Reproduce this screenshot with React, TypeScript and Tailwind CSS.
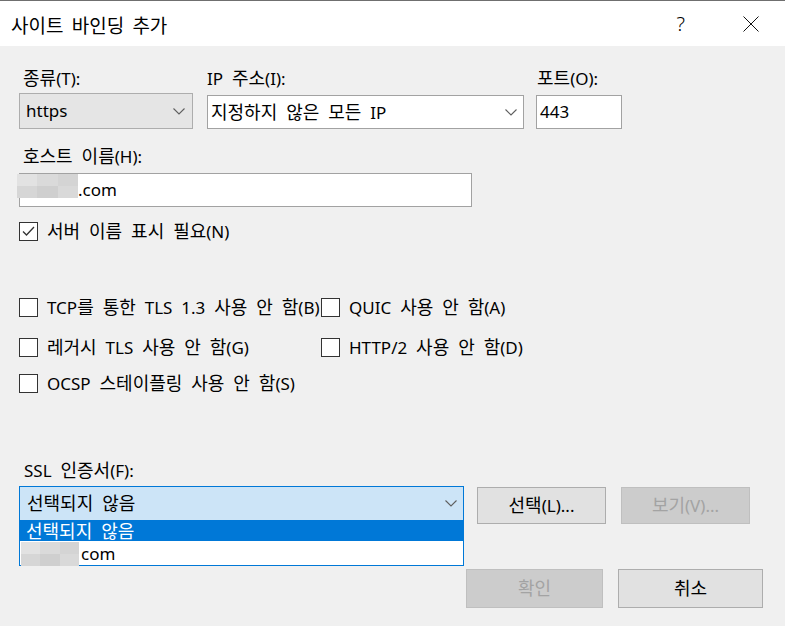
import React from "react";

const HANGUL = /([\uAC00-\uD7A3]+)/;

function K({ t, size = "text-[18px]" }: { t: string; size?: string }) {
  const parts = t.split(HANGUL);
  return (
    <span>
      {parts.map((p, i) =>
        /[\uAC00-\uD7A3]/.test(p) ? (
          <span key={i} className={size}>
            {p}
          </span>
        ) : (
          <span key={i}>{p}</span>
        )
      )}
    </span>
  );
}

function Chevron() {
  return (
    <svg width="12" height="7" viewBox="0 0 12 7" className="shrink-0">
      <polyline points="0.5,0.5 6,6 11.5,0.5" fill="none" stroke="#5f5f5f" strokeWidth="1.1" />
    </svg>
  );
}

function Check({ checked = false, label }: { checked?: boolean; label: string }) {
  return (
    <div className="flex items-center h-[19px] whitespace-nowrap">
      <div className="w-[19px] h-[19px] border border-[#333333] bg-white shrink-0 flex items-center justify-center">
        {checked && (
          <svg width="17" height="17" viewBox="0 0 17 17">
            <polyline points="3,8.5 6.5,12 14,4" fill="none" stroke="#333333" strokeWidth="1.3" />
          </svg>
        )}
      </div>
      <span className="ml-[9px] leading-[20px]">
        <K t={label} />
      </span>
    </div>
  );
}

function Blur({ cls }: { cls: string }) {
  return (
    <div className={"absolute grid grid-cols-3 grid-rows-2 " + cls}>
      <div className="bg-[#e2e2e2]" />
      <div className="bg-[#dadada]" />
      <div className="bg-[#d4d4d4]" />
      <div className="bg-[#d6d6d6]" />
      <div className="bg-[#cfcfcf]" />
      <div className="bg-[#d9d9d9]" />
    </div>
  );
}

export default function App() {
  return (
    <div className="w-[785px] h-[626px] bg-[#f0f0f0] relative overflow-hidden text-black text-[17px] [word-spacing:4.5px] font-['Noto_Sans','Noto_Sans_CJK_KR',sans-serif]">
      {/* Title bar */}
      <div className="h-[46px] bg-white border-t border-[#6f6f6f] flex items-center">
        <div className="pl-[11px] text-[19px] leading-[24px] [word-spacing:4px] font-['Noto_Sans_CJK_KR',sans-serif] mt-[2px]">
          사이트 바인딩 추가
        </div>
        <div className="ml-auto flex items-center">
          <span className="text-[20px] font-light leading-none mr-[58px] font-['Noto_Sans',sans-serif]">?</span>
          <svg width="16" height="16" viewBox="0 0 16 16" className="mr-[26px]">
            <line x1="0.5" y1="0.5" x2="15.5" y2="15.5" stroke="#111" strokeWidth="1" />
            <line x1="15.5" y1="0.5" x2="0.5" y2="15.5" stroke="#111" strokeWidth="1" />
          </svg>
        </div>
      </div>

      {/* Content */}
      <div className="pl-[19px]">
        {/* Row: type / ip / port */}
        <div className="flex mt-[22px]">
          <div className="w-[174px] flex flex-col">
            <div className="h-[20px] leading-[20px] pl-[4px]">
              <K t="종류(T):" />
            </div>
            <div className="mt-[5px] h-[36px] bg-[#e5e5e5] border border-[#adadad] flex items-center pl-[6px] pr-[7px]">
              <span className="flex-1">https</span>
              <Chevron />
            </div>
          </div>
          <div className="ml-[14px] w-[317px] flex flex-col">
            <div className="h-[20px] leading-[20px]">
              <K t="IP 주소(I):" />
            </div>
            <div className="mt-[7px] h-[34px] bg-white border border-[#a2a2a2] flex items-center pl-[3px] pr-[6px]">
              <span className="flex-1 leading-[20px]">
                <K t="지정하지 않은 모든 IP" />
              </span>
              <Chevron />
            </div>
          </div>
          <div className="ml-[12px] w-[86px] flex flex-col">
            <div className="h-[20px] leading-[20px] pl-[1px]">
              <K t="포트(O):" />
            </div>
            <div className="mt-[7px] h-[34px] bg-white border border-[#a2a2a2] flex items-center pl-[3px]">
              443
            </div>
          </div>
        </div>

        {/* Host name */}
        <div className="mt-[17px] h-[20px] leading-[20px] pl-[4px]">
          <K t="호스트 이름(H):" />
        </div>
        <div className="mt-[7px] w-[453px] h-[34px] bg-white border border-[#a2a2a2] flex items-center relative">
          <span className="pl-[58px]">.com</span>
          <Blur cls="left-[-3px] top-[0px] w-[61px] h-[24px]" />
        </div>

        <div className="mt-[15px]">
          <Check checked label="서버 이름 표시 필요(N)" />
        </div>

        {/* Options */}
        <div className="mt-[57px] flex">
          <div className="w-[302px] shrink-0">
            <Check label="TCP를 통한 TLS 1.3 사용 안 함(B)" />
          </div>
          <Check label="QUIC 사용 안 함(A)" />
        </div>
        <div className="mt-[21px] flex">
          <div className="w-[302px] shrink-0">
            <Check label="레거시 TLS 사용 안 함(G)" />
          </div>
          <Check label="HTTP/2 사용 안 함(D)" />
        </div>
        <div className="mt-[17px] flex">
          <Check label="OCSP 스테이플링 사용 안 함(S)" />
        </div>

        {/* SSL */}
        <div className="mt-[67px] h-[20px] leading-[20px] pl-[5px]">
          <K t="SSL 인증서(F):" />
        </div>
        <div className="mt-[6px] flex items-start">
          <div className="relative w-[445px]">
            <div className="h-[35px] bg-[#cce4f7] border border-[#0078d7] flex items-center pl-[7px] pr-[6px]">
              <span className="flex-1 leading-[20px]">
                <K t="선택되지 않음" />
              </span>
              <Chevron />
            </div>
            <div className="absolute left-0 top-full w-full h-[45px] bg-white border border-t-0 border-[#0078d7] flex flex-col z-10">
              <div className="h-[20px] bg-[#0078d7] text-white flex items-center pl-[6px] leading-[20px]">
                <K t="선택되지 않음" />
              </div>
              <div className="flex-1 flex items-center relative pl-[61px]">
                com
                <Blur cls="left-[1px] top-[1px] w-[58px] h-[24px]" />
              </div>
            </div>
          </div>
          <button className="ml-[13px] mt-[1px] w-[129px] h-[37px] bg-[#e1e1e1] border border-[#adadad] flex items-center justify-center leading-[20px]">
            <K t="선택(L)..." />
          </button>
          <button className="ml-[15px] mt-[1px] w-[129px] h-[37px] bg-[#cccccc] border border-[#bfbfbf] text-[#a3a3a3] flex items-center justify-center leading-[20px]">
            <K t="보기(V)..." />
          </button>
        </div>

        {/* Bottom buttons */}
        <div className="mt-[45px] flex justify-end pr-[22px]">
          <button className="w-[137px] h-[39px] bg-[#cccccc] border border-[#bfbfbf] text-[#a3a3a3] flex items-center justify-center leading-[20px]">
            <K t="확인" />
          </button>
          <button className="ml-[15px] w-[145px] h-[39px] bg-[#e1e1e1] border border-[#adadad] flex items-center justify-center leading-[20px]">
            <K t="취소" />
          </button>
        </div>
      </div>
    </div>
  );
}
